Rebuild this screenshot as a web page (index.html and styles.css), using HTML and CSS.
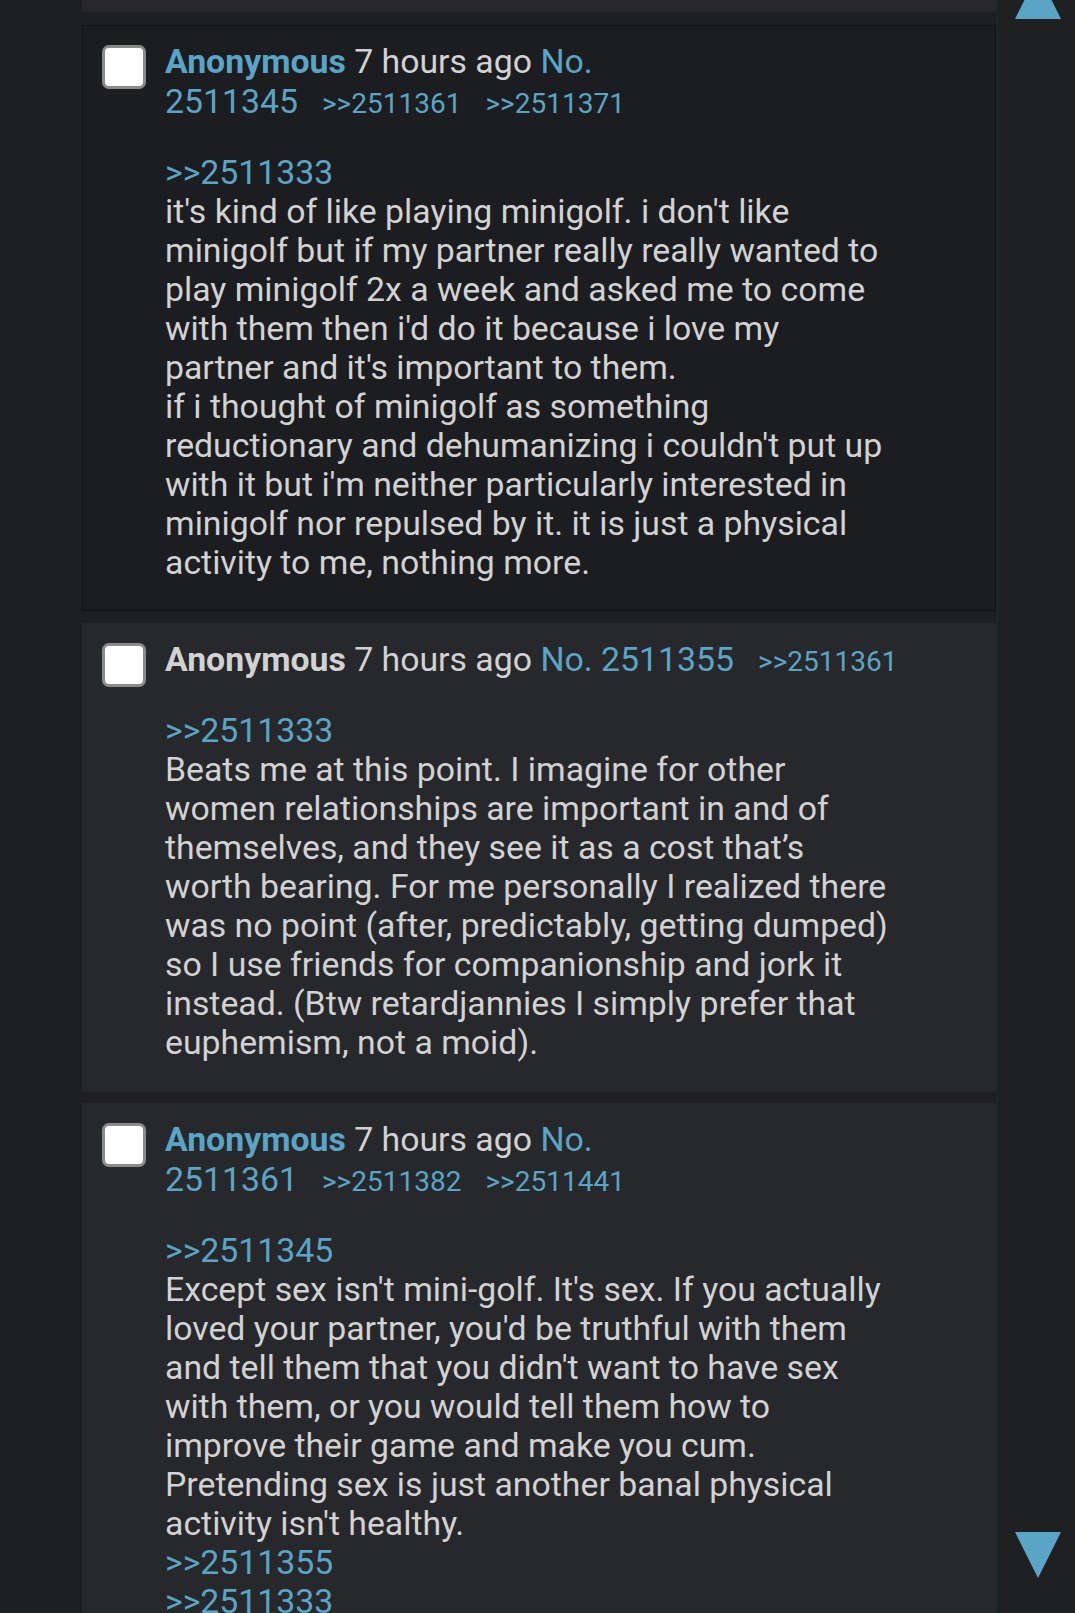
FILE: index.html
```html
<!DOCTYPE html>
<html lang="en">
  <head>
    <meta charset="UTF-8" />
    <title>thread</title>
    <link rel="stylesheet" href="styles.css">
  </head>
  <body>
    <div class="page">
      <div class="thread">
        <div class="post tail"></div>

        <div class="post hl">
          <div class="check"></div>
          <div class="content">
            <div class="header">
              <span class="name">Anonymous</span> 7 hours ago <a>No.</a>
              <span class="nums"><a>2511345</a><a class="backlink">&gt;&gt;2511361</a><a class="backlink">&gt;&gt;2511371</a></span>
            </div>
            <blockquote class="body">
              <a>&gt;&gt;2511333</a><br>
              it's kind of like playing minigolf. i don't like minigolf but if my partner really really wanted to play minigolf 2x a week and asked me to come with them then i'd do it because i love my partner and it's important to them.<br>
              if i thought of minigolf as something reductionary and dehumanizing i couldn't put up with it but i'm neither particularly interested in minigolf nor repulsed by it. it is just a physical activity to me, nothing more.
            </blockquote>
          </div>
        </div>

        <div class="post">
          <div class="check"></div>
          <div class="content">
            <div class="header">
              <span class="name own">Anonymous</span> 7 hours ago <a>No.</a>
              <span class="nums"><a>2511355</a><a class="backlink">&gt;&gt;2511361</a></span>
            </div>
            <blockquote class="body">
              <a>&gt;&gt;2511333</a><br>
              Beats me at this point. I imagine for other women relationships are important in and of themselves, and they see it as a cost that’s worth bearing. For me personally I realized there was no point (after, predictably, getting dumped) so I use friends for companionship and jork it instead. (Btw retardjannies I simply prefer that euphemism, not a moid).
            </blockquote>
          </div>
        </div>

        <div class="post">
          <div class="check"></div>
          <div class="content">
            <div class="header">
              <span class="name">Anonymous</span> 7 hours ago <a>No.</a>
              <span class="nums"><a>2511361</a><a class="backlink">&gt;&gt;2511382</a><a class="backlink">&gt;&gt;2511441</a></span>
            </div>
            <blockquote class="body">
              <a>&gt;&gt;2511345</a><br>
              Except sex isn't mini-golf. It's sex. If you actually loved your partner, you'd be truthful with them and tell them that you didn't want to have sex with them, or you would tell them how to improve their game and make you cum. Pretending sex is just another banal physical activity isn't healthy.<br>
              <a>&gt;&gt;2511355</a><br>
              <a>&gt;&gt;2511333</a>
            </blockquote>
          </div>
        </div>
      </div>

      <div class="side">
        <svg class="arrow up" width="46" height="46" viewBox="0 0 46 46"><polygon points="23,0 46,46 0,46" /></svg>
        <svg class="arrow down" width="46" height="46" viewBox="0 0 46 46"><polygon points="0,0 46,0 23,46" /></svg>
      </div>
    </div>
  </body>
</html>
```

FILE: styles.css
```css
body {
  margin: 0;
  background: #1e1f22;
  color: #d2d2d2;
  font-family: Roboto, "Noto Sans", sans-serif;
}
a {
  color: #5aa5c5;
  text-decoration: none;
}
.page {
  display: flex;
  height: 1613px;
  overflow: hidden;
}
.thread {
  flex: 1;
  padding-left: 82px;
}
.side {
  width: 77px;
  flex: none;
  border-left: 2px solid #162827;
  background: #1f2022;
  display: flex;
  flex-direction: column;
  justify-content: space-between;
  align-items: center;
}
.arrow {
  fill: #5aa5c5;
  margin-left: 2px;
}
.arrow.up {
  margin-top: -27px;
}
.arrow.down {
  margin-bottom: 35px;
}
.post {
  display: flex;
  background: #27282c;
  margin-bottom: 12px;
  padding: 17px 20px 29px 20px;
  box-shadow: 0 1px 1px #19292a;
}
.post.tail {
  height: 11px;
  padding: 0;
  margin-bottom: 14px;
}
.post.hl {
  background: #1c1d20;
  border: 1px solid #111214;
  box-shadow: none;
  padding: 16px 19px 28px 19px;
}
.check {
  flex: none;
  width: 44px;
  height: 44px;
  box-sizing: border-box;
  border: 3px solid #8a8a8a;
  border-radius: 7px;
  background: #fff;
  margin-top: 3px;
  margin-right: 19px;
}
.content {
  flex: 1;
}
.header {
  font-size: 33.8px;
  line-height: 40px;
}
.name {
  font-weight: 700;
  color: #5aa5c5;
}
.name.own {
  color: #d2d2d2;
}
.nums {
  white-space: nowrap;
}
.backlink {
  font-size: 28px;
  margin-left: 24px;
}
.body {
  margin: 29px 0 0;
  font-size: 33.8px;
  line-height: 39px;
  max-width: 725px;
}
```
